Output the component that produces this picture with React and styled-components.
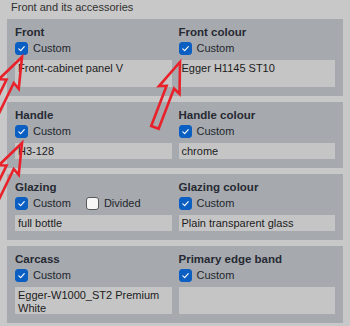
import React from "react";
import styled, { createGlobalStyle } from "styled-components";

const GlobalStyle = createGlobalStyle`
  body {
    margin: 0;
    background: #c8c8c8;
    font-family: "Liberation Sans", Arial, sans-serif;
  }
`;

const Page = styled.div`
  position: relative;
  width: 350px;
  height: 326px;
  overflow: hidden;
  box-sizing: border-box;
  padding: 0 7px;
  background: #c8c8c8;
`;

const Header = styled.div`
  height: 19px;
  padding-left: 4px;
  font-size: 11px;
  line-height: 15px;
  color: #303030;
`;

const Stack = styled.div`
  display: flex;
  flex-direction: column;
  gap: 6px;
`;

const Panel = styled.div`
  display: grid;
  grid-template-columns: 1fr 1fr;
  column-gap: 7px;
  padding: 6px 8px 9px;
  background: #a6a9ae;
`;

const Field = styled.div`
  display: flex;
  flex-direction: column;
  min-width: 0;
`;

const Title = styled.div`
  font-size: 11.5px;
  font-weight: bold;
  line-height: 15px;
  color: #262a33;
`;

const CheckRow = styled.div`
  display: flex;
  align-items: center;
  gap: 15px;
  height: 16px;
`;

const CheckItem = styled.label`
  display: flex;
  align-items: center;
  gap: 5px;
  font-size: 11px;
  color: #23262d;
`;

const Box = styled.span`
  display: inline-flex;
  align-items: center;
  justify-content: center;
  box-sizing: border-box;
  width: 13px;
  height: 13px;
  border-radius: 3px;
  background: ${(p) => (p.$checked ? "#0b5fc2" : "#f7f7f7")};
  border: 1px solid ${(p) => (p.$checked ? "#0b5fc2" : "#5a5a5a")};
`;

const Input = styled.div`
  margin-top: 4px;
  box-sizing: border-box;
  height: ${(p) => (p.$rows > 1 ? 27 : 16)}px;
  padding: 2px 3px 0;
  background: #c5c5c5;
  font-size: 11px;
  line-height: 13px;
  color: #1c1c1c;
  overflow: hidden;
`;

const Overlay = styled.svg`
  position: absolute;
  left: 0;
  top: 0;
  pointer-events: none;
`;

const Check = ({ checked, label }) => (
  <CheckItem>
    <Box $checked={checked}>
      {checked && (
        <svg width="9" height="9" viewBox="0 0 9 9">
          <polyline
            points="1.8,4.8 3.7,6.6 7.3,2.6"
            fill="none"
            stroke="#fff"
            strokeWidth="1.1"
            strokeLinecap="round"
            strokeLinejoin="round"
          />
        </svg>
      )}
    </Box>
    {label}
  </CheckItem>
);

const Group = ({ title, value, rows = 1, divided }) => (
  <Field>
    <Title>{title}</Title>
    <CheckRow>
      <Check checked label="Custom" />
      {divided && <Check label="Divided" />}
    </CheckRow>
    <Input $rows={rows}>{value}</Input>
  </Field>
);

const Arrow = ({ x, y, angle }) => (
  <polygon
    points="0,0 11,30 4,27 4,70 -4,70 -4,27 -11,30"
    transform={`translate(${x} ${y}) rotate(${angle})`}
    fill="none"
    stroke="#e8212a"
    strokeWidth="2.6"
    strokeLinejoin="miter"
  />
);

const panels = [
  [
    { title: "Front", value: "Front-cabinet panel V", rows: 2 },
    { title: "Front colour", value: "Egger H1145 ST10", rows: 2 },
  ],
  [
    { title: "Handle", value: "H3-128" },
    { title: "Handle colour", value: "chrome" },
  ],
  [
    { title: "Glazing", value: "full bottle", divided: true },
    { title: "Glazing colour", value: "Plain transparent glass" },
  ],
  [
    { title: "Carcass", value: "Egger-W1000_ST2 Premium White", rows: 2 },
    { title: "Primary edge band", value: "", rows: 2 },
  ],
];

export default function App() {
  return (
    <>
      <GlobalStyle />
      <Page>
        <Header>Front and its accessories</Header>
        <Stack>
          {panels.map((pair, i) => (
            <Panel key={i}>
              {pair.map((g) => (
                <Group key={g.title} {...g} />
              ))}
            </Panel>
          ))}
        </Stack>
        <Overlay width="350" height="326" viewBox="0 0 350 326">
          <Arrow x={22} y={57} angle={26} />
          <Arrow x={180} y={62} angle={21} />
          <Arrow x={22} y={143} angle={26} />
        </Overlay>
      </Page>
    </>
  );
}
